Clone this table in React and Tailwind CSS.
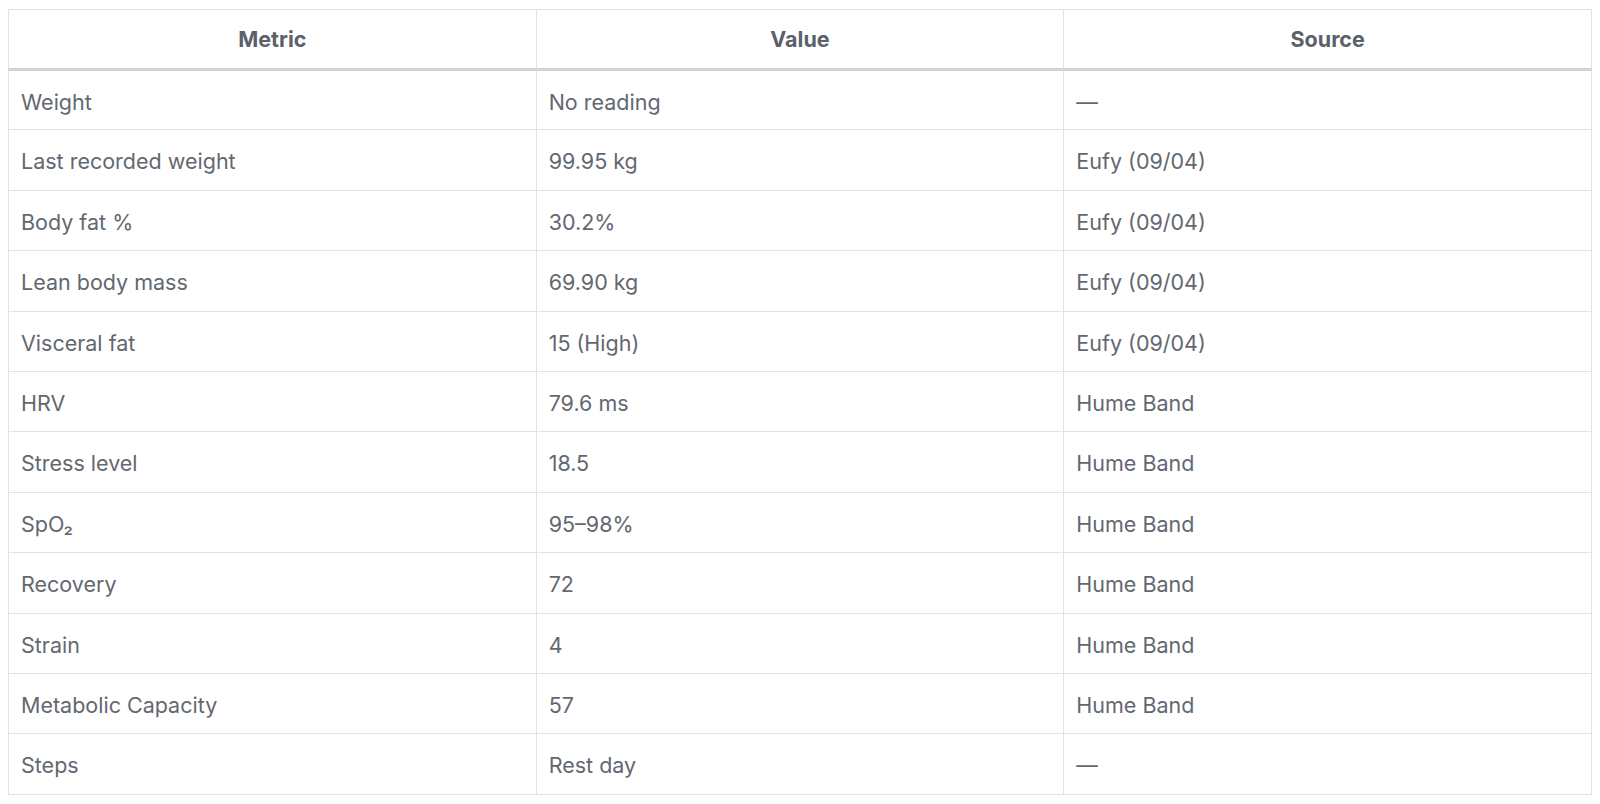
const rows = [
  ["Weight", "No reading", "—"],
  ["Last recorded weight", "99.95 kg", "Eufy (09/04)"],
  ["Body fat %", "30.2%", "Eufy (09/04)"],
  ["Lean body mass", "69.90 kg", "Eufy (09/04)"],
  ["Visceral fat", "15 (High)", "Eufy (09/04)"],
  ["HRV", "79.6 ms", "Hume Band"],
  ["Stress level", "18.5", "Hume Band"],
  ["SpO₂", "95–98%", "Hume Band"],
  ["Recovery", "72", "Hume Band"],
  ["Strain", "4", "Hume Band"],
  ["Metabolic Capacity", "57", "Hume Band"],
  ["Steps", "Rest day", "—"],
]

export default function App() {
  return (
    <div className="bg-white min-h-screen p-2 font-['Inter','Liberation_Sans',sans-serif] text-[21.5px] text-[#636870]">
      <table className="w-full table-fixed border-collapse border border-[#e3e3e3] mt-px">
        <thead>
          <tr>
            <th className="h-[60px] border-x border-[#e3e3e3] border-b-[3px] border-b-[#d2d2d2] px-3 text-center font-bold text-[#5b616a]">
              Metric
            </th>
            <th className="h-[60px] border-x border-[#e3e3e3] border-b-[3px] border-b-[#d2d2d2] px-3 text-center font-bold text-[#5b616a]">
              Value
            </th>
            <th className="h-[60px] border-x border-[#e3e3e3] border-b-[3px] border-b-[#d2d2d2] px-3 text-center font-bold text-[#5b616a]">
              Source
            </th>
          </tr>
        </thead>
        <tbody>
          {rows.map((r) => (
            <tr key={r[0]}>
              {r.map((c, i) => (
                <td key={i} className="h-[60.4px] border border-[#e3e3e3] px-3 pt-[3px] text-left">
                  {c}
                </td>
              ))}
            </tr>
          ))}
        </tbody>
      </table>
    </div>
  )
}
